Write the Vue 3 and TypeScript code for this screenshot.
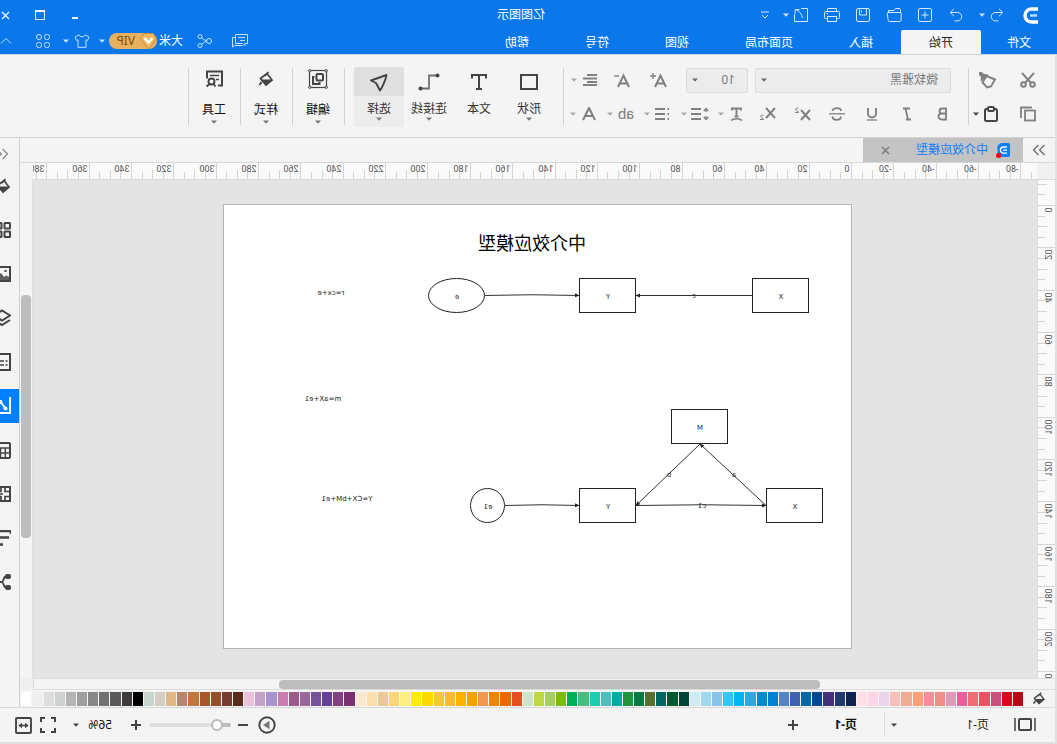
<script setup lang="ts">
import { computed, h, ref } from 'vue'

type IconDef = [number, number, string]

const icons: Record<string, IconDef> = {
  logo: [16, 17, '<path d="M0 2h6.500a6.500 6.500 0 0 1 0 13H0" stroke-width="3.400"/><path d="M1 8.500h7" stroke-width="2.400" opacity=".75"/>'],
  undo: [14, 14, '<path d="M5 .8 1.200 4.500 5 8.200M1.500 4.500H8.500a4.200 4.200 0 0 1 0 8.400H5.500"/>'],
  redo: [14, 14, '<path d="M9 .8 12.800 4.500 9 8.200M12.500 4.500H5.500a4.200 4.200 0 0 0 0 8.400H8.500"/>'],
  caret: [6, 4, '<path d="M0 .5h6L3 3.700z" fill="currentColor" stroke="none"/>'],
  add: [14, 14, '<rect x=".5" y=".5" width="13" height="13" rx="1.500"/><path d="M7 3.500v7M3.500 7h7"/>'],
  folder: [16, 14, '<path d="M1.500 5V2a1.500 1.500 0 0 1 1.500-1.500h3.500l1.500 2h5.500V5M1.800 4.500h12a1 1 0 0 1 1 1.200l-1 6.500a1.500 1.500 0 0 1-1.500 1.300H2.500A1.500 1.500 0 0 1 1 12L.7 5.700a1 1 0 0 1 1.100-1.200z"/>'],
  save: [14, 14, '<rect x=".5" y=".5" width="13" height="13" rx="1.500"/><path d="M3.500.5v6.500h7V.5M8.500 2.500v2"/>'],
  print: [16, 14, '<path d="M3.500 3.500v-3h9v3M3.500 10.500h-2a1 1 0 0 1-1-1v-5a1 1 0 0 1 1-1h13a1 1 0 0 1 1 1v5a1 1 0 0 1-1 1h-2"/><rect x="3.500" y="8.500" width="9" height="5"/><path d="M12 5.500h1.500"/>'],
  exportIcon: [14, 14, '<path d="M7 .5H.5v13h13V6M8.500 1.500h4M12.800 1.500v4M12.500 1.500C8.500 3 6 6 5.500 10"/>'],
  more: [8, 8, '<path d="M0 1h8M1 4l3 3 3-3"/>'],
  minimize: [8, 10, '<path d="M1 8h6" stroke-width="2"/>'],
  maximize: [10, 10, '<path d="M.5 1v8.500h9V1" /><path d="M0 1h10" stroke-width="2"/>'],
  close: [9, 9, '<path d="M1 1l7 7M8 1 1 8" stroke-width="1.400"/>'],
  chat: [16, 14, '<path d="M.5.5h12v9h-7l-2.500 2v-2H.5zM12.500 3.500h3v9.500l-2-1.500h-8"/><path d="M3 3.500h7M3 6.500h5"/>'],
  share: [15, 14, '<circle cx="3" cy="7" r="2.500"/><circle cx="12" cy="2.500" r="2"/><circle cx="12" cy="11.500" r="2"/><path d="M5.500 6.500l2-.5 3-2M5.500 7.500l2 .5 3 2.500"/>'],
  shirt: [16, 14, '<path d="M5 .8 1 3l1.500 3.500 1.500-.7v7.500h8V5.800l1.500.7L15 3 11 .8C10.500 3.500 5.500 3.500 5 .8z" stroke-linejoin="round"/>'],
  apps: [14, 14, '<rect x=".5" y=".5" width="5" height="5" rx="2"/><circle cx="11" cy="3" r="2.500"/><rect x=".5" y="8.500" width="5" height="5" rx="2"/><rect x="8.500" y="8.500" width="5" height="5" rx="2"/>'],
  up: [12, 8, '<path d="M1 6.500 6 1.500l5 5"/>'],
  cut: [16, 16, '<path d="M2 1l8.500 9.500M14 1 5.500 10.500" stroke-width="1.900"/><circle cx="3.500" cy="12.500" r="2.300" stroke-width="2"/><circle cx="12.500" cy="12.500" r="2.300" stroke-width="2"/>'],
  copy: [16, 16, '<rect x="1" y="4.500" width="10" height="10" stroke-width="1.800"/><path d="M4 1.500h11v10.500" stroke-width="1.800"/>'],
  brush: [18, 17, '<path d="M2 7.500 10.500 4l4 6.500-4.500 5-4-1z" stroke-width="1.900"/><path d="M9 3 13 2.500 15 .5h2.500v2.500L15.500 5l.5 4z" fill="currentColor" stroke="currentColor"/>'],
  paste: [14, 16, '<rect x="1" y="3" width="12" height="12" rx="1.500" stroke-width="2"/><rect x="4" y="1" width="6" height="4" rx="1.500" stroke-width="2" fill="#f4f4f4"/>'],
  bold: [11, 14, '<path d="M2 1.500h4a2.500 2.500 0 0 1 0 5H2zM2 6.500h4.500a3 3 0 0 1 0 6H2z" stroke-width="1.900"/>'],
  italic: [10, 14, '<path d="M2 1.500h7M1 12.500h5M6.500 1.500 4 12.500" stroke-width="1.800"/>'],
  underline: [12, 14, '<path d="M2 1v5.500a4 4 0 0 0 8 0V1" stroke-width="1.900"/><path d="M1 13h10" stroke-width="1.300"/>'],
  strike: [16, 14, '<path d="M12.500 4C12 .2 4 .2 4 4M4 9.500c0 4.500 8.500 4.500 8.500 0" stroke-width="1.800"/><path d="M0 6.800h16" stroke-width="1.300"/>'],
  sup: [17, 14, '<path d="M1 3l9 10M10 3 1 13" stroke-width="1.900"/><path d="M12.500 2c.5-1.500 3-1 3 .3 0 1-3 2-3 3.200h3.500"/>'],
  sub: [17, 14, '<path d="M1 1l9 10M10 1 1 11" stroke-width="1.900"/><path d="M12.500 9c.5-1.500 3-1 3 .3 0 1-3 2-3 3.200h3.500"/>'],
  textArc: [13, 15, '<path d="M2 3.500V1.500h9v2M6.500 1.500v8M4.500 9.500h4" stroke-width="1.900"/><path d="M1 13.500c2-2.500 9-2.500 11 0" stroke-width="1.500"/>'],
  spacing: [19, 14, '<path d="M8 2h10M8 7h10M8 12h10" stroke-width="2"/><path d="M3 1v4M3 9v4M.8 4 3 1.500 5.200 4M.8 10 3 12.500 5.200 10" stroke-width="1.300"/>'],
  bullets: [15, 14, '<path d="M5 2h10M5 7h10M5 12h10" stroke-width="2"/><path d="M1 2h1.500M1 7h1.500M1 12h1.500" stroke-width="1.800"/>'],
  fontA: [14, 14, '<path d="M1 13 7 1l6 12M3.500 9h7" stroke-width="2"/>'],
  fontUp: [17, 15, '<path d="M1 14 6.500 2.500 12 14M3 10.500h7" stroke-width="2"/><path d="M11 3h6M14 0v6" stroke-width="1.400"/>'],
  fontDown: [17, 15, '<path d="M1 14 6.500 2.500 12 14M3 10.500h7" stroke-width="2"/><path d="M11 3h5" stroke-width="1.400"/>'],
  align: [14, 12, '<path d="M0 1h10M0 4.500h14M0 8h10M0 11h14" stroke-width="1.900"/>'],
  shape: [20, 18, '<rect x="2" y="2" width="16" height="14" stroke-width="2"/>'],
  text: [18, 18, '<path d="M2 5.500V2h14v3.500M9 2v14M6 16h6" stroke-width="2"/>'],
  connector: [22, 18, '<path d="M4 2.500h7v13h7" stroke-width="1.800" opacity=".75" transform="translate(22 0) scale(-1 1)"/><circle cx="19.500" cy="15.500" r="2" fill="currentColor" stroke="none" transform="translate(-17 0)"/><circle cx="19.500" cy="2.500" r="2" fill="currentColor" stroke="none"/>'],
  select: [20, 20, '<path d="M2.500 3 18 8.500l-5 2.500-4 7.500C7 16 3 7 2.500 3z" stroke-width="1.900" stroke-linejoin="round"/>'],
  edit: [20, 20, '<rect x="1.500" y="1.500" width="17" height="17" stroke-width="1.200"/><g fill="#f4f4f4"><circle cx="1.800" cy="1.800" r="1.200"/><circle cx="18.200" cy="1.800" r="1.200"/><circle cx="1.800" cy="18.200" r="1.200"/><circle cx="18.200" cy="18.200" r="1.200"/></g><rect x="5" y="5" width="6.500" height="6.500" rx="1" stroke-width="2"/><path d="M13.500 8h1.500v7H8.500v-2" stroke-width="2"/>'],
  bucket: [16, 18, '<path d="M5.500 2 9 6M7 3.500 2 10l6 5 5.500-6.500L7 3.500z" stroke-width="1.700"/><path d="M2 9.500h12L8 15.500z" fill="currentColor" stroke="none"/><path d="M12.500 12l2 3" stroke-width="2"/>'],
  tools: [18, 18, '<path d="M5 15.500H1v-14h15v7" stroke-width="2"/><path d="M4 5.500h9M4 9.500h3" stroke-width="1.500"/><circle cx="11.500" cy="11.500" r="3" stroke-width="1.900"/><path d="M13.500 14l3 2.500M9.500 14l-2 2.500" stroke-width="1.900"/>'],
  next: [14, 12, '<path d="M1.500 1l5 5-5 5M7.500 1l5 5-5 5" stroke-width="1.200"/>'],
  prev: [14, 12, '<path d="M6.500 1l-5 5 5 5M12.500 1l-5 5 5 5" stroke-width="1.200"/>'],
  doc: [14, 15, '<path d="M0 1.500A1.500 1.500 0 0 1 1.500 0H9l3.500 2.500V14H1.500A1.500 1.500 0 0 1 0 12.500z" fill="#0a80ff" stroke="none"/><path d="M3 4h3.500a3 3 0 0 1 0 6.200H3M3 7.100h4" stroke="#fff" stroke-width="1.300"/><circle cx="11.500" cy="12.500" r="2.500" fill="#f00" stroke="none"/>'],
  boards: [16, 16, '<g stroke-width="2"><rect x="1" y="1" width="5.500" height="5.500" rx=".5"/><rect x="9.500" y="1" width="5.500" height="5.500" rx=".5"/><rect x="1" y="9.500" width="5.500" height="5.500" rx=".5"/><rect x="9.500" y="9.500" width="5.500" height="5.500" rx=".5"/></g>'],
  picture: [16, 16, '<rect x="1" y="1" width="14" height="14" stroke-width="2"/><path d="M2 11l2.500-1.500L7 11l3-4 4 4v3H2z" fill="currentColor" stroke="none" opacity=".85"/><path d="M4.500 5h2" stroke-width="2"/>'],
  layers: [18, 18, '<path d="M1 6.500 9 1.500l8 5-8 5zM1 11l8 5 8-5" stroke-width="2"/>'],
  page: [16, 18, '<rect x="1" y="1" width="14" height="16" stroke-width="2"/><path d="M3.500 8h2M7 8h6M3.500 12h2M7 12h6" stroke-width="1.600"/>'],
  chart: [18, 18, '<path d="M1 0v16h16" stroke-width="2"/><path d="M5.500 11.500 10 5.500l6-2" stroke-width="2"/><circle cx="5.500" cy="11.500" r="2" fill="currentColor" stroke="none"/><circle cx="10.500" cy="5" r="2" fill="currentColor" stroke="none"/>'],
  table: [16, 17, '<rect x="1" y="1" width="14" height="15" rx="1" stroke-width="2"/><path d="M1 6h14M1 11h14M5.700 6v10M10.500 6v10" stroke-width="1.500"/>'],
  grid: [16, 16, '<rect x="1" y="1" width="14" height="14" stroke-width="2"/><path d="M1 5.500h5V1M1 10.500h5V15M8 8h3M10 1v4.500h5M10 15v-4.500h5" stroke-width="1.700"/>'],
  gantt: [18, 16, '<path d="M0 4V1h18M2 7.500h9M8 14.500h7" stroke-width="2.600"/>'],
  mindmap: [18, 16, '<path d="M5 2.500c3 0 2 5 4 5.500M5 13.500c3 0 2-5 4-5.500M8 8h8" stroke-width="1.800"/><rect x="0" y="0" width="6" height="5" rx="2" fill="currentColor" stroke="none"/><rect x="0" y="11" width="6" height="5" rx="2" fill="currentColor" stroke="none"/>'],
  present: [22, 14, '<path d="M1 0v13M21 0v13" stroke-width="2" opacity=".75"/><rect x="5" y="1" width="12" height="11" rx="1" stroke-width="2"/>'],
  plus: [12, 12, '<path d="M6 1v10M1 6h10" stroke-width="2"/>'],
  minus: [12, 12, '<path d="M1 6h10" stroke-width="2"/>'],
  play: [18, 18, '<circle cx="9" cy="9" r="7.700" stroke-width="1.900"/><path d="M6.500 4.800 13 9l-6.500 4.200z" fill="#777" stroke="none"/>'],
  fit: [16, 16, '<path d="M1 5V1h4M11 1h4v4M15 11v4h-4M5 15H1v-4" stroke-width="2"/>'],
  fitWidth: [17, 17, '<rect x="1" y="1" width="15" height="15" rx="1" stroke-width="1.900"/><path d="M4 8.500h9" stroke-width="1.600"/><path d="M3.500 8.500 7 5.800v5.400zM13.500 8.500 10 5.800v5.400z" fill="currentColor" stroke="none"/>'],
}
// Connector runs from the top-left dot to the bottom-right dot.
icons.connector = [22, 18, '<path d="M4 2.500h7v13h7" stroke-width="1.800" opacity=".75"/><circle cx="2.500" cy="2.500" r="2" fill="currentColor" stroke="none"/><circle cx="19.500" cy="15.500" r="2" fill="currentColor" stroke="none"/>']

const Icon = (props: { name: string }) => {
  const [w, ht, markup] = icons[props.name]
  return h('svg', {
    width: w, height: ht, viewBox: `0 0 ${w} ${ht}`,
    fill: 'none', stroke: 'currentColor', 'aria-hidden': 'true', innerHTML: markup,
  })
}
Icon.props = ['name']

const quick = [
  ['redo', '重做'], ['add', '新建'], ['folder', '打开'], ['save', '保存'], ['print', '打印'], ['exportIcon', '导出'],
]
const menus = ['文件', '开始', '插入', '页面布局', '视图', '符号', '帮助']
const activeMenu = ref('开始')

const formats = [['bold', '加粗'], ['italic', '斜体'], ['underline', '下划线'], ['strike', '删除线'], ['sup', '上标'], ['sub', '下标']]
const splits = [['textArc', '文字方向'], ['spacing', '行距'], ['bullets', '项目符号'], ['ab', '突出显示'], ['fontA', '字体颜色']]

const tools = [
  { icon: 'shape', label: '形状', menu: true },
  { icon: 'text', label: '文本', menu: false },
  { icon: 'connector', label: '连接线', menu: true },
  { icon: 'select', label: '选择', menu: true },
]
const activeTool = ref('选择')
const panels = [
  { icon: 'edit', label: '编辑' },
  { icon: 'bucket', label: '样式' },
  { icon: 'tools', label: '工具' },
]

const side = [
  ['bucket', '填充'], ['boards', '符号库'], ['picture', '图片'], ['layers', '图层'], ['page', '页面'],
  ['chart', '图表'], ['table', '表格'], ['grid', '平面图'], ['gantt', '甘特图'], ['mindmap', '思维导图'],
]
const activeSide = ref('chart')

// Ruler geometry: page width of 297 mm is drawn 629 px wide.
const pxPerMm = 629 / 297
const ticks = (from: number, to: number, origin: number) => {
  const out: { mm: number; at: number; major: boolean; mid: boolean }[] = []
  for (let mm = from; mm <= to; mm += 5) {
    out.push({ mm, at: Math.round(origin + mm * pxPerMm) + 0.5, major: mm % 20 === 0, mid: mm % 10 === 0 })
  }
  return out
}
const hTicks = ticks(-85, 385, 185)
const vTicks = ticks(-10, 220, 25)

const palette = `b50a17 d9081e c9517b ec5264 ec6d74 e8609c e298b7 ef9088 f0909a ffa07a f0ab94 f7bfbb ead5ea ffd5e5 ffdfe5
0f2350 22396f 43307a 06478f 0068a6 3e62ad 5584c4 0081cf 008ccf 2ca9e1 00b6f0 30c8f8 8cc3ea a0d8ef cfeaf5
004634 005a2e 006660 576e2e 007b43 1f963c 00ada0 52bdbf 1ccdb0 48bb7d 00b056 7fb80e a5cf62 bed742 cce6c5
e55020 ec6800 f08300 f39850 f2a500 ffb000 ffb833 fac832 ffd800 ffec00 fdf080 fdd575 ebca94 fdddab fbe8d0
79316f 824180 674196 745399 9a669e 9c5a8a cc7db1 a994cf c5a3c8 ebc2dc 5a2a1a 763c30 944e2a a9562a c1783e
b6876c deb887 d6cdc5 cad5cd 000000 3e3a39 595959 717171 888888 9d9f9e b3b5b4 cfd1d0 dcdddd eeeeee ffffff`
  .split(/\s+/).map((c) => '#' + c)

const zoom = ref(56)
const zoomFill = computed(() => `${Math.round((zoom.value / 400) * 100)}%`)
</script>

<template>
  <div class="app">
    <header class="top">
      <div class="titlebar">
        <div class="quick">
          <Icon name="logo" class="logo" />
          <button class="q-undo" aria-label="撤销"><Icon name="undo" /></button>
          <button class="caret q-undo-caret" aria-label="撤销列表"><Icon name="caret" /></button>
          <button v-for="q in quick" :key="q[0]" class="q" :aria-label="q[1]"><Icon :name="q[0]" /></button>
          <button class="caret q-export-caret" aria-label="导出选项"><Icon name="caret" /></button>
          <button class="q" aria-label="自定义"><Icon name="more" /></button>
        </div>
        <div class="title">亿图图示</div>
        <div class="window">
          <button aria-label="最小化"><Icon name="minimize" /></button>
          <button aria-label="最大化"><Icon name="maximize" /></button>
          <button aria-label="关闭"><Icon name="close" /></button>
        </div>
      </div>
      <div class="menubar">
        <nav class="menus">
          <button v-for="m in menus" :key="m" :class="['menu', { active: m === activeMenu }]" @click="activeMenu = m">{{ m }}</button>
        </nav>
        <div class="account">
          <button class="acc" aria-label="消息"><Icon name="chat" /></button>
          <button class="acc" aria-label="分享"><Icon name="share" /></button>
          <span class="user">大米</span>
          <span class="vip">
            <svg width="17" height="16" viewBox="0 0 17 16" aria-hidden="true">
              <path d="M4 .5h9l3.500 5L9 15.500H8L.5 5.500z" fill="#f0b95f" stroke="#c98d35" />
              <path d="M4.500 5 8.500 9.500 12.500 5" fill="none" stroke="#fff" stroke-width="2.500" />
            </svg>
            <span>VIP</span>
          </span>
          <button class="caret acc-caret" aria-label="账户"><Icon name="caret" /></button>
          <button class="shirt" aria-label="皮肤"><Icon name="shirt" /></button>
          <button class="caret shirt-caret" aria-label="皮肤列表"><Icon name="caret" /></button>
          <button class="acc" aria-label="应用"><Icon name="apps" /></button>
          <button class="acc last" aria-label="收起功能区"><Icon name="up" /></button>
        </div>
      </div>
    </header>

    <div class="body">
      <section class="ribbon">
        <div class="clip">
          <div class="row">
            <button class="w36" aria-label="剪切"><Icon name="cut" /></button>
            <button class="w36 gap4" aria-label="格式刷"><Icon name="brush" /></button>
          </div>
          <div class="row">
            <button class="w36" aria-label="复制"><Icon name="copy" /></button>
            <button class="w30 gap4 dark" aria-label="粘贴"><Icon name="paste" /></button>
            <button class="caret paste-caret dark" aria-label="粘贴选项"><Icon name="caret" /></button>
          </div>
        </div>
        <div class="font">
          <div class="row row-top">
            <label class="field family"><select aria-label="字体"><option>微软雅黑</option></select><Icon name="caret" /></label>
            <label class="field size"><select aria-label="字号"><option>10</option></select><Icon name="caret" /></label>
            <button class="w37 grow-font" aria-label="增大字号"><Icon name="fontUp" /></button>
            <button class="w37" aria-label="减小字号"><Icon name="fontDown" /></button>
            <div class="split"><button class="main" aria-label="对齐"><Icon name="align" /></button><button class="caret" aria-label="对齐选项"><Icon name="caret" /></button></div>
          </div>
          <div class="row row-bottom">
            <button v-for="f in formats" :key="f[0]" class="w35" :aria-label="f[1]"><Icon :name="f[0]" /></button>
            <div v-for="s in splits" :key="s[0]" :class="['split', s[0]]">
              <button class="main" :aria-label="s[1]">
                <span v-if="s[0] === 'ab'" class="ab">ab</span>
                <Icon v-else :name="s[0]" />
              </button>
              <button class="caret" :aria-label="s[1] + '选项'"><Icon name="caret" /></button>
            </div>
          </div>
        </div>
        <div class="tools">
          <button v-for="t in tools" :key="t.label" :class="['tool', { active: t.label === activeTool }]" @click="activeTool = t.label">
            <span class="tool-icon"><Icon :name="t.icon" /></span>
            <span class="tool-label">{{ t.label }}</span>
            <Icon v-if="t.menu" name="caret" class="tool-caret" />
          </button>
        </div>
        <div v-for="p in panels" :key="p.label" class="panel">
          <button class="tool">
            <span class="tool-icon"><Icon :name="p.icon" /></span>
            <span class="tool-label">{{ p.label }}</span>
            <Icon name="caret" class="tool-caret" />
          </button>
        </div>
      </section>

      <div class="work">
        <main class="editor">
          <div class="tabs">
            <button class="expand" aria-label="展开面板"><Icon name="next" /></button>
            <div class="doc">
              <Icon name="doc" />
              <a href="#doc">中介效应模型</a>
              <button aria-label="关闭文档"><Icon name="close" /></button>
            </div>
          </div>

          <div class="stage">
            <div class="corner"></div>
            <svg class="hruler" width="100%" height="18">
              <g v-for="t in hTicks" :key="t.mm">
                <line :x1="t.at" :x2="t.at" :y1="t.major ? 0 : t.mid ? 7 : 9" y2="17" />
                <text v-if="t.major" :x="t.at + 2" y="9">{{ t.mm }}</text>
              </g>
            </svg>
            <div class="vtop"></div>
            <svg class="vruler" width="18" height="100%">
              <g v-for="t in vTicks" :key="t.mm">
                <line :y1="t.at" :y2="t.at" :x1="t.major ? 0 : t.mid ? 8 : 10" x2="17" />
                <text v-if="t.major" :transform="`translate(10 ${t.at + 2}) rotate(-90)`" text-anchor="end">{{ t.mm }}</text>
              </g>
            </svg>

            <div class="canvas">
              <svg class="sheet" width="629" height="445" viewBox="0 0 629 445">
                <defs>
                  <marker id="arrow" markerWidth="5" markerHeight="5" refX="4" refY="2.500" orient="auto">
                    <path d="M0 .5 4.500 2.500 0 4.500z" fill="#222" />
                  </marker>
                </defs>
                <rect class="edge" x=".5" y=".5" width="628" height="444" />
                <text class="heading" x="320" y="46">中介效应模型</text>
                <g class="wires">
                  <path d="M100 91.500H216" />
                  <path d="M367 91.500Q320 90 273 91.500" />
                  <path d="M216 301.500Q150 300 86 301.500" />
                  <path d="M86 301.500 152 240" />
                  <path d="M152 240 216 301.500" />
                  <path d="M347 301.500Q310 300 273 301.500" />
                </g>
                <g class="nodes">
                  <rect x="43.500" y="74.500" width="56" height="34" />
                  <rect x="216.500" y="74.500" width="56" height="34" />
                  <ellipse cx="395.500" cy="91.500" rx="28" ry="17" />
                  <rect x="124.500" y="205.500" width="56" height="34" />
                  <rect x="29.500" y="284.500" width="56" height="34" />
                  <rect x="216.500" y="284.500" width="56" height="34" />
                  <circle cx="364.500" cy="301.500" r="17" />
                </g>
                <g class="labels">
                  <text x="71" y="95">X</text>
                  <text x="244" y="95">Y</text>
                  <text x="395" y="95">e</text>
                  <text x="158" y="94">c</text>
                  <text x="152" y="226">M</text>
                  <text x="57" y="305">X</text>
                  <text x="244" y="305">Y</text>
                  <text x="364" y="305">e1</text>
                  <text x="118" y="273">a</text>
                  <text x="183" y="273">b</text>
                  <text x="150" y="304">c1</text>
                  <text x="521" y="91">r=cx+e</text>
                  <text x="529" y="197">m=aX+e1</text>
                  <text x="505" y="297">Y=CX+bM+e1</text>
                </g>
              </svg>
            </div>
            <div class="vscroll"><div class="thumb"></div></div>
            <div class="hscroll"><div class="thumb"></div></div>
            <div class="scroll-corner"></div>
          </div>

          <div class="palette">
            <button class="fill" aria-label="填充颜色"><Icon name="bucket" /></button>
            <div class="swatches">
              <button v-for="(c, i) in palette" :key="i" class="swatch" :style="{ background: c }" :aria-label="c"></button>
            </div>
          </div>
        </main>

        <aside class="side">
          <button class="collapse" aria-label="收起侧栏"><Icon name="prev" /></button>
          <button v-for="s in side" :key="s[1]" :class="['side-btn', { active: s[0] === activeSide }]" :aria-label="s[1]" @click="activeSide = s[0]"><Icon :name="s[0]" /></button>
        </aside>
      </div>

      <footer class="status">
        <button class="present" aria-label="页面视图"><Icon name="present" /></button>
        <button class="pagename">页-1</button>
        <button class="caret page-caret" aria-label="页面列表"><Icon name="caret" /></button>
        <button class="pagetab">页-1</button>
        <button class="addpage" aria-label="新增页面"><Icon name="plus" /></button>
        <div class="zoom">
          <button class="w18" aria-label="播放"><Icon name="play" /></button>
          <button class="w12" aria-label="缩小"><Icon name="minus" /></button>
          <input v-model.number="zoom" class="slider" type="range" min="10" max="400" aria-label="缩放" :style="{ '--fill': zoomFill }" />
          <button class="w12" aria-label="放大"><Icon name="plus" /></button>
          <span class="percent">{{ zoom }}%</span>
          <button class="caret" aria-label="缩放比例"><Icon name="caret" /></button>
          <button class="w18 fit" aria-label="适应页面"><Icon name="fit" /></button>
          <button class="w18" aria-label="适应宽度"><Icon name="fitWidth" /></button>
        </div>
      </footer>
    </div>
  </div>
</template>

<style>
body { margin: 0; }
</style>

<style scoped>
/* The whole window is displayed as a horizontal reflection. */
.app {
  transform: scaleX(-1);
  height: 100vh;
  display: flex;
  flex-direction: column;
  overflow: hidden;
  background: #f4f4f4;
  color: #222;
  font: 12px/16px "Noto Sans", "Noto Sans CJK SC", sans-serif;
}
.app *, .app { box-sizing: border-box; }
button {
  border: 0;
  padding: 0;
  margin: 0;
  background: none;
  color: inherit;
  font: inherit;
  display: flex;
  align-items: center;
  justify-content: center;
  flex: none;
}
svg { flex: none; display: block; }
.caret { width: 10px; }

.top { background: #0a78eb; color: #fff; border-bottom: 1px solid #cfd4da; flex: none; }
.titlebar { display: grid; grid-template-columns: 1fr auto 1fr; height: 30px; align-items: center; }
.quick { display: flex; align-items: center; color: #d4e8ff; }
.logo { margin: 0 15px 0 19px; color: #fff; }
.q-undo { width: 20px; }
.q-undo-caret { margin-right: 5px; }
.q { width: 31px; }
.q-export-caret { margin-left: -5px; }
.title { padding-left: 15px; }
.window { display: flex; justify-content: flex-end; margin-right: -12px; height: 26px; color: #e8f3ff; }
.window button { width: 35px; }
.menubar { display: flex; justify-content: space-between; height: 24px; }
.menus { display: flex; }
.menu { padding: 2px 28px 0; height: 24px; }
.menu:first-child { padding: 2px 26px 0; }
.menu.active { background: #f4f4f4; color: #222; border-radius: 2px 2px 0 0; }
.account { display: flex; align-items: center; height: 22px; margin-right: -12px; color: #c5e0ff; }
.acc { width: 36px; }
.user { margin: 0 2px 0 3px; color: #fff; }
.vip {
  width: 48px;
  height: 16px;
  border-radius: 8px;
  background: #e6b260;
  color: #7a4d10;
  display: flex;
  align-items: center;
  gap: 5px;
}
.acc-caret { margin-left: 2px; }
.shirt { width: 30px; }
.shirt-caret { margin-left: -4px; }
.last { margin-left: 1px; }

.body { flex: 1; min-height: 0; display: flex; flex-direction: column; border-left: 2px solid #dfdfdf; }
.ribbon { display: flex; height: 83px; padding: 8px 0; border-bottom: 1px solid #d2d2d2; color: #808080; flex: none; }
.row { display: flex; height: 34px; align-items: center; }
.clip { width: 87px; padding-left: 9px; }
.dark { color: #444; }
.w36 { width: 36px; }
.w30 { width: 30px; }
.w37 { width: 37px; }
.w35 { width: 35px; }
.gap4 { margin-left: 4px; }
.paste-caret { margin-left: -5px; }
.font { width: 405px; }
.clip, .font { background: linear-gradient(#d2d2d2, #d2d2d2) right 5px / 1px 57px no-repeat; }
.row-top { padding-left: 17px; }
.row-bottom { padding-left: 8px; }
.field {
  display: flex;
  align-items: center;
  height: 25px;
  border: 1px solid #dcdcdc;
  border-radius: 2px;
  background: #ececec;
  padding-right: 5px;
  color: #6a6a6a;
}
.family { width: 196px; margin-right: 7px; }
.size { width: 62px; }
.field select {
  flex: 1;
  min-width: 0;
  appearance: none;
  border: 0;
  background: none;
  color: #7a7a7a;
  font: inherit;
  padding: 0 0 0 12px;
}
.grow-font { margin-left: 9px; }
.split { display: flex; width: 37px; }
.main { width: 22px; }
.split.textArc { margin-left: 2px; }
.row-top .split { margin-left: 2px; }
.split .caret { color: #aaa; }
.ab { font-size: 15px; font-family: Roboto, sans-serif; }
.tools { display: flex; padding-left: 9px; width: 219px; background: linear-gradient(#d2d2d2, #d2d2d2) right 5px / 1px 57px no-repeat; }
.tool { flex-direction: column; justify-content: flex-start; width: 50px; height: 60px; margin-top: 4px; border-radius: 2px; color: #444; }
.tool.active { background: linear-gradient(#dfdfdf 29px, #ececec 29px); }
.tool-icon { height: 30px; display: flex; align-items: center; }
.tool-label { height: 20px; line-height: 24px; color: #333; }
.tool-caret { color: #777; }
.panel { width: 52px; padding-left: 1px; background: linear-gradient(#d2d2d2, #d2d2d2) right 5px / 1px 57px no-repeat; }
.panel .tool-icon { height: 24px; }
.panel .tool-label { height: 29px; line-height: 38px; color: #111; }

.work { flex: 1; min-height: 0; display: flex; }
.editor { flex: 1; min-width: 0; display: flex; flex-direction: column; }
.tabs { display: flex; height: 24px; flex: none; }
.expand { width: 32px; color: #666; }
.doc { display: flex; align-items: center; width: 160px; padding-left: 13px; background: #c3c3c3; }
.doc a { margin-left: 8px; color: #0a80ff; text-decoration: none; }
.doc button { margin-left: auto; margin-right: 18px; color: #777; }
.stage {
  flex: 1;
  min-height: 0;
  display: grid;
  grid-template-columns: 18px minmax(0, 1fr) 13px;
  grid-template-rows: 18px minmax(0, 1fr) 12px;
}
.corner { background: #f0f0f0; border-top: 1px solid #d9d9d9; border-bottom: 1px solid #d9d9d9; }
.hruler { background: #fafafa; border: solid #d9d9d9; border-width: 1px 0; }
.vtop { border-top: 1px solid #d9d9d9; }
.vruler { background: #fafafa; border-right: 1px solid #d9d9d9; grid-row: 2; }
.hruler line, .vruler line { stroke: #d4d4d4; }
.hruler text, .vruler text { font: 9px Roboto, sans-serif; fill: #555; }
.canvas { background: #e4e4e4; overflow: hidden; padding: 24px 0 0 185px; }
.sheet { background: #fff; }
.edge { fill: none; stroke: #b4b4b4; }
.heading { font-size: 18px; fill: #000; text-anchor: middle; }
.wires path { fill: none; stroke: #333; marker-end: url(#arrow); }
.nodes > * { fill: #fff; stroke: #222; }
.labels text { font: 7px "DejaVu Sans", sans-serif; fill: #222; text-anchor: middle; }
.vscroll { display: grid; grid-template-rows: 115fr 243fr 140fr; border-left: 1px solid #e0e0e0; }
.vscroll .thumb { grid-row: 2; width: 10px; margin-left: 1px; border-radius: 4px; background: #bdbdbd; }
.hscroll { grid-column: 1 / 3; border: 1px solid #dcdcdc; border-left: 0; padding-top: 1px; }
.hscroll .thumb { width: 53%; height: 9px; margin-left: 23%; border-radius: 4px; background: #bdbdbd; }
.scroll-corner { background: #efefef; }
.palette { display: flex; height: 17px; flex: none; }
.fill { width: 32px; color: #444; }
.fill svg { height: 15px; }
.swatches { flex: 1; display: flex; gap: 1px; padding: 2px 1px 1px 0; }
.swatch { flex: 1; height: 14px; }

.side { width: 20px; flex: none; border-left: 1px solid #cfcfcf; overflow: hidden; color: #444; }
.collapse { height: 31px; padding: 0 0 0 10px; color: #888; }
.side-btn { width: 34px; height: 34px; margin-bottom: 10px; padding-left: 8px; justify-content: flex-start; }
.side-btn.active { background: #0080ff; color: #fff; }

.status { display: flex; align-items: center; height: 37px; border-top: 1px solid #d9d9d9; border-bottom: 2px solid #dfdfdf; flex: none; color: #444; }
.present { margin-left: 19px; }
.pagename { width: 90px; margin-left: 25px; justify-content: flex-start; color: #222; }
.page-caret { margin-right: 4px; }
.pagetab { height: 24px; border-left: 1px solid #dcdcdc; padding-left: 27px; font-weight: 700; color: #111; }
.addpage { margin-left: 35px; }
.zoom { display: flex; align-items: center; margin-left: auto; padding-right: 15px; }
.w18 { width: 18px; }
.w12 { width: 12px; margin-left: 9px; }
.slider {
  appearance: none;
  width: 82px;
  height: 4px;
  margin: 0 -2px 0 6px;
  border-radius: 2px;
  background: linear-gradient(to right, #bdbdbd var(--fill), #dedede var(--fill));
}
.slider::-webkit-slider-thumb {
  appearance: none;
  width: 12px;
  height: 12px;
  border: 2px solid #bbb;
  border-radius: 50%;
  background: #fff;
}
.percent { width: 26px; margin: 0 5px 0 18px; color: #111; }
.fit { margin: 0 6px 0 14px; }
</style>
